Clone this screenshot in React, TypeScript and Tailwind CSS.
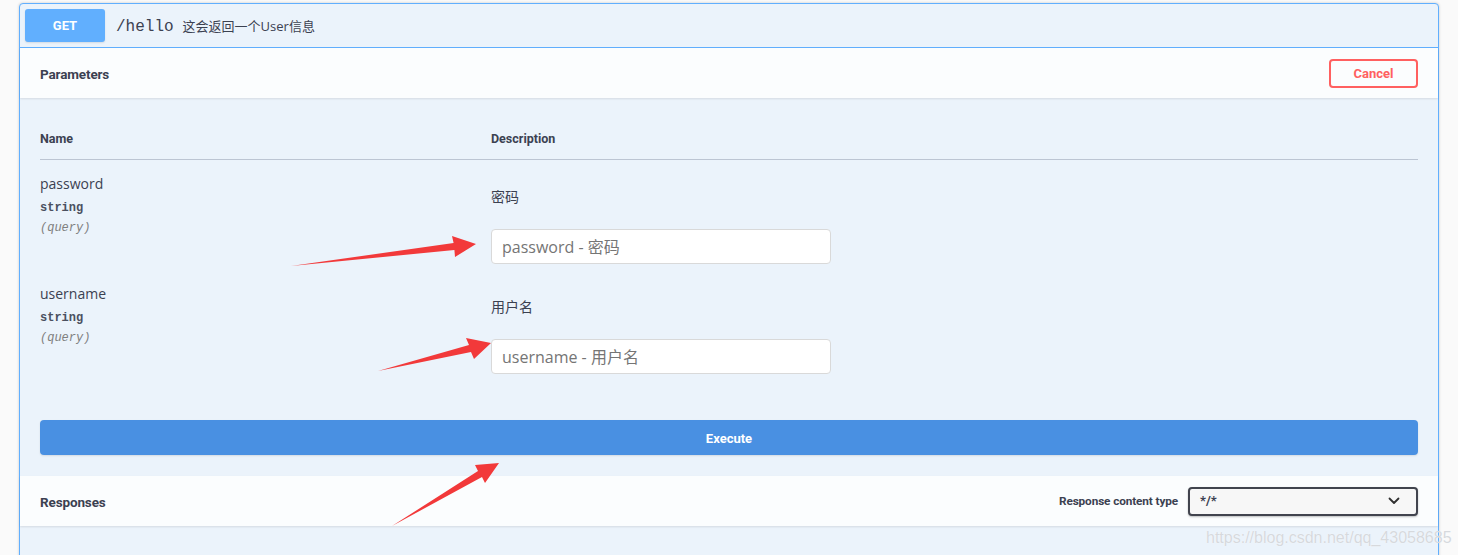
import { useState } from 'react';

const params = [
    { name: 'password', desc: '密码' },
    { name: 'username', desc: '用户名' },
];

function Arrows() {
    // red annotation arrows drawn over the screenshot
    return (
        <svg className="absolute left-0 top-0 pointer-events-none" width="1458" height="555" viewBox="0 0 1458 555">
            <polygon points="291,266 453.6,243 452,236 476,244 455,257 454.4,250" fill="#f2393a" />
            <polygon points="378,371 469,345 466,338 491,343 474,359 471,352" fill="#f2393a" />
            <polygon points="392,526 478,471 475,465 499,463 485,483 482,477" fill="#f2393a" />
        </svg>
    );
}

export default function App() {
    const [values, setValues] = useState<Record<string, string>>({});

    return (
        <div className="relative w-[1458px] h-[555px] overflow-hidden bg-[#fafafa] text-[#3b4151] font-['Open_Sans',sans-serif]">
            <div className="ml-[19px] mt-[3px] w-[1420px] border border-[#61affe] rounded-[4px] bg-[#ebf3fb] shadow-[0_0_3px_rgba(0,0,0,0.19)]">
                {/* summary */}
                <div className="flex items-center h-[44px] px-[5px] border-b border-[#61affe]">
                    <span className="flex items-center justify-center w-[80px] h-[33px] pt-[1px] rounded-[3px] bg-[#61affe] text-white text-[13px] font-bold font-['Roboto',sans-serif] shadow-[0_1px_2px_rgba(0,0,0,0.1)]">
                        GET
                    </span>
                    <span className="ml-[11px] mt-[3px] text-[16px] font-['Liberation_Mono',monospace] text-[#3b4151]">/hello</span>
                    <span className="ml-[9px] mt-[2px] text-[13px] font-['Open_Sans','Noto_Sans_CJK_SC',sans-serif] text-[#3b4151]">这会返回一个User信息</span>
                </div>

                {/* parameters header */}
                <div className="flex items-center justify-between h-[50px] px-[20px] bg-white/80 shadow-[0_1px_2px_rgba(0,0,0,0.1)]">
                    <h4 className="mt-[3px] text-[13.5px] font-bold font-['Roboto',sans-serif] tracking-[-0.01em]">Parameters</h4>
                    <button className="w-[89px] h-[29px] pt-[1px] border-2 border-[#ff6060] rounded-[4px] bg-transparent text-[#ff6060] text-[13px] font-bold font-['Roboto',sans-serif]">
                        Cancel
                    </button>
                </div>

                {/* parameters table */}
                <div className="px-[20px]">
                    <div className="grid grid-cols-[451px_1fr] pt-[33px] pb-[12px] border-b border-[#bcc5d3] text-[12.5px] leading-[16px] font-bold font-['Roboto',sans-serif]">
                        <span>Name</span>
                        <span>Description</span>
                    </div>
                    {params.map(p => (
                        <div key={p.name} className="grid grid-cols-[451px_1fr] pb-[6px]">
                            <div className="pt-[14px]">
                                <div className="text-[14px] leading-[20px] text-[#3b4151]">{p.name}</div>
                                <div className="mt-[6px] text-[12px] leading-[16px] font-bold font-['Liberation_Mono',monospace] text-[#4a5060]">string</div>
                                <div className="mt-[4px] text-[12px] leading-[16px] italic text-[#808080] font-['Liberation_Mono',monospace]">(query)</div>
                            </div>
                            <div className="pt-[27px]">
                                <div className="text-[14px] leading-[20px] font-['Open_Sans','Noto_Sans_CJK_SC',sans-serif]">{p.desc}</div>
                                <input
                                    className="mt-[22px] block w-[340px] h-[35px] px-[10px] rounded-[4px] border border-[#d9d9d9] bg-white text-[16px] font-['Open_Sans','Noto_Sans_CJK_SC',sans-serif] placeholder:text-[#757575] outline-none"
                                    placeholder={`${p.name} - ${p.desc}`}
                                    value={values[p.name] || ''}
                                    onChange={e => setValues(v => ({ ...v, [p.name]: e.target.value }))}
                                />
                            </div>
                        </div>
                    ))}
                    <button className="mt-[40px] mb-[21px] w-full h-[35px] pt-[2px] rounded-[4px] bg-[#4990e2] text-white text-[13px] font-bold font-['Roboto',sans-serif] shadow-[0_1px_2px_rgba(0,0,0,0.1)]">
                        Execute
                    </button>
                </div>

                {/* responses header */}
                <div className="flex items-center justify-between h-[50px] px-[20px] bg-white/80 shadow-[0_1px_2px_rgba(0,0,0,0.1)]">
                    <h4 className="mt-[3px] text-[13.5px] font-bold font-['Roboto',sans-serif] tracking-[-0.01em]">Responses</h4>
                    <div className="flex items-center gap-[10px]">
                        <span className="mt-[2px] text-[11.8px] font-bold font-['Roboto',sans-serif] tracking-[-0.01em]">Response content type</span>
                        <div className="flex items-center justify-between w-[230px] h-[29px] pl-[10px] pr-[16px] rounded-[4px] border-2 border-[#41444e] bg-[#f7f7f7] shadow-[0_1px_2px_rgba(0,0,0,0.25)]">
                            <span className="text-[13px] font-bold font-['Roboto',sans-serif]">*/*</span>
                            <svg width="12" height="8" viewBox="0 0 12 8" fill="none">
                                <path d="M1.5 1.5 6 6l4.5-4.5" stroke="#303030" strokeWidth="1.8" strokeLinecap="round" strokeLinejoin="round" />
                            </svg>
                        </div>
                    </div>
                </div>
                <div className="h-[40px]" />
            </div>

            <span className="absolute left-[1206px] top-[526px] text-[16px] font-['Liberation_Sans',sans-serif] text-[#d6d9dd] [text-shadow:0_0_1px_#ffffff]">
                https://blog.csdn.net/qq_43058685
            </span>
            <Arrows />
        </div>
    );
}
